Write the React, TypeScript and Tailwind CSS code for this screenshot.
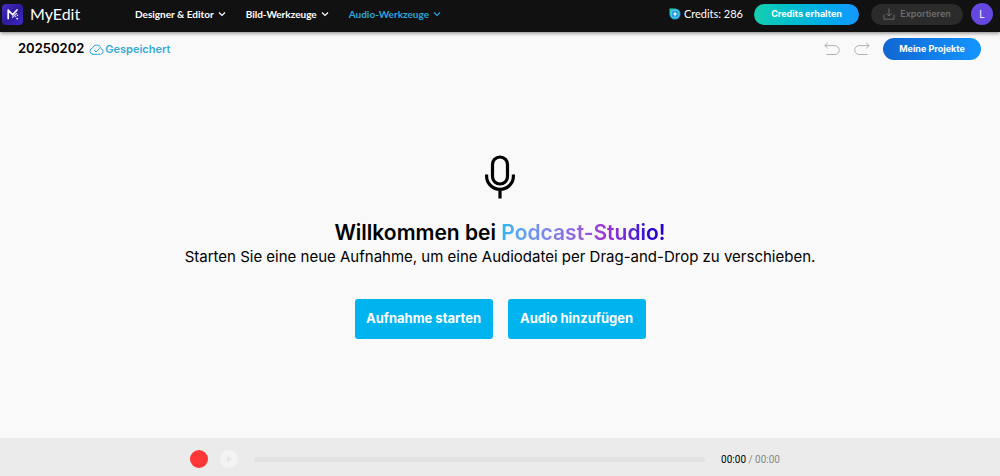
import type { ReactNode } from 'react'

const navItems = [
  { label: 'Designer & Editor', active: false },
  { label: 'Bild-Werkzeuge', active: false },
  { label: 'Audio-Werkzeuge', active: true },
]

function Logo() {
  return (
    <svg viewBox="0 0 21 21" className="size-[21px]" aria-hidden="true">
      <defs>
        <linearGradient id="logo-bg" x1="0" y1="0" x2="1" y2="1">
          <stop offset="0" stopColor="#4a2fc4" />
          <stop offset="0.5" stopColor="#2d1a9c" />
          <stop offset="1" stopColor="#3c2bc8" />
        </linearGradient>
      </defs>
      <rect width="21" height="21" rx="4" fill="url(#logo-bg)" />
      <path d="M6.2 14.6V6l4.4 4.8L15 6" fill="none" stroke="#fff" strokeWidth="1.7" strokeLinejoin="round" strokeLinecap="round" />
      <path d="M10.6 13.2 14.6 9.4" fill="none" stroke="#d9d2ff" strokeWidth="1.3" strokeLinecap="round" />
      <circle cx="15.2" cy="14.6" r="0.9" fill="#fff" />
      <circle cx="13.6" cy="12.5" r="0.8" fill="#c9c0ff" />
      <circle cx="15.4" cy="11.2" r="0.7" fill="#fff" />
    </svg>
  )
}

function Chevron() {
  return (
    <svg viewBox="0 0 8 8" className="size-2" fill="none" stroke="currentColor" strokeWidth="1.2" aria-hidden="true">
      <path d="M1 2.5 4 5.5 7 2.5" />
    </svg>
  )
}

function CreditIcon() {
  return (
    <svg viewBox="0 0 12 12" className="size-3" aria-hidden="true">
      <defs>
        <linearGradient id="credit" x1="0" y1="0" x2="1" y2="1">
          <stop offset="0" stopColor="#25d6b0" />
          <stop offset="1" stopColor="#1493f5" />
        </linearGradient>
      </defs>
      <path d="M.5.5H6A5.5 5.5 0 1 1 .5 6Z" fill="url(#credit)" />
      <circle cx="6" cy="6" r="3.9" fill="#1690d8" stroke="#7be3f2" strokeWidth="0.7" />
      <path d="M6 3.6 6.6 5.4 8.4 6 6.6 6.6 6 8.4 5.4 6.6 3.6 6 5.4 5.4Z" fill="#fff" stroke="#fff" strokeWidth="0.3" />
    </svg>
  )
}

function DownloadIcon() {
  return (
    <svg viewBox="0 0 12 12" className="size-3" fill="none" stroke="currentColor" strokeWidth="1" aria-hidden="true">
      <path d="M1 6.5v4.7h10V6.5M6 .5v7.3M3.3 5.3 6 8l2.7-2.7" />
    </svg>
  )
}

function CloudCheckIcon() {
  return (
    <svg viewBox="0 0 15 11" className="h-[11px] w-[15px]" fill="none" stroke="currentColor" strokeWidth="1" strokeLinecap="round" strokeLinejoin="round" aria-hidden="true">
      <path d="M3.7 10.3h7.8a2.9 2.9 0 0 0 .5-5.7A4.4 4.4 0 0 0 3.5 4 3.2 3.2 0 0 0 3.7 10.3Z" />
      <path d="M5.3 6.3 7 8l3.3-3.4" />
    </svg>
  )
}

function UndoIcon() {
  return (
    <svg viewBox="0 0 16 14" className="h-3.5 w-4" fill="none" stroke="currentColor" strokeWidth="1" aria-hidden="true">
      <path d="M3.8.8.8 3.6l3 2.8M.8 3.6h10a4.4 4.4 0 0 1 0 8.9H2.5" />
    </svg>
  )
}

function MicIcon() {
  return (
    <svg viewBox="0 0 30 44" className="h-11 w-[30px]" fill="none" stroke="#000" strokeWidth="3.2" aria-hidden="true">
      <rect x="7.5" y="2" width="15" height="27" rx="7.5" />
      <path d="M1.6 19.5v1.8a13.4 13 0 0 0 26.8 0V19.5M15 34.5v9" />
    </svg>
  )
}

function ActionButton({ children }: { children: ReactNode }) {
  return (
    <button type="button" className="h-10 w-[138px] rounded-[3px] bg-[#00b4ef] text-[13px] font-bold text-white">
      {children}
    </button>
  )
}

export default function App() {
  return (
    <div className="flex min-h-screen flex-col bg-[#f9f9f9] font-['Inter','DejaVu_Sans',sans-serif] text-black">
      <header className="z-10 flex h-8 items-center bg-[#111111] pr-[7px] pb-1 pl-0.5 text-white shadow-[0_1px_4px_rgba(0,0,0,0.5)]">
        <a href="#" className="flex w-[133px] items-center gap-[7px]">
          <Logo />
          <span className="font-['Lato',sans-serif] text-[16px] leading-5">MyEdit</span>
        </a>
        <nav className="flex gap-5 font-['Lato',sans-serif] text-[10px] font-bold">
          {navItems.map((item) => (
            <button
              key={item.label}
              type="button"
              className={item.active ? 'flex items-center gap-1 whitespace-nowrap text-[#2ba6de]' : 'flex items-center gap-1 whitespace-nowrap'}
            >
              {item.label}
              <Chevron />
            </button>
          ))}
        </nav>
        <div className="ml-auto flex items-center">
          <span className="mr-[11px] flex items-center gap-[3px] font-['Lato',sans-serif] text-[11px] whitespace-nowrap">
            <CreditIcon />
            Credits: 286
          </span>
          <button type="button" className="mr-3 h-[21px] w-[105px] rounded-full bg-linear-to-r from-[#17cfae] to-[#1697ff] text-[9px] font-bold">
            Credits erhalten
          </button>
          <button type="button" disabled className="mr-2 flex h-[21px] w-[92px] items-center justify-center gap-[5px] rounded-full bg-[#2b2b2b] text-[9px] font-semibold text-[#6c6c6c]">
            <DownloadIcon />
            Exportieren
          </button>
          <button type="button" aria-label="Konto" className="size-[22px] rounded-full bg-[#6648e0] text-[10px]">
            L
          </button>
        </div>
      </header>

      <div className="flex h-[34px] items-center pr-[19px] pl-[18px]">
        <h2 className="text-[13px] font-semibold">20250202</h2>
        <span className="ml-[5px] flex items-center gap-px text-[11px] font-semibold text-[#35aad5]">
          <CloudCheckIcon />
          Gespeichert
        </span>
        <div className="ml-auto flex items-center text-[#b0b0b0]">
          <button type="button" aria-label="Rückgängig" className="mr-3.5">
            <UndoIcon />
          </button>
          <button type="button" aria-label="Wiederholen" className="mr-[13px] -scale-x-100">
            <UndoIcon />
          </button>
          <button type="button" className="h-[22px] w-[98px] rounded-full bg-linear-to-r from-[#1166d2] to-[#1496ff] text-[9px] font-bold text-white">
            Meine Projekte
          </button>
        </div>
      </div>

      <main className="flex flex-1 flex-col items-center justify-center pb-2.5 text-center">
        <MicIcon />
        <h1 className="mt-5 text-[21px] leading-7 font-semibold">
          Willkommen bei{' '}
          <span className="bg-linear-to-r from-[#20b8f4] via-[#a02cd4] via-65% to-[#2a00d0] to-90% bg-clip-text text-transparent">
            Podcast-Studio!
          </span>
        </h1>
        <p className="text-[15px] leading-5">Starten Sie eine neue Aufnahme, um eine Audiodatei per Drag-and-Drop zu verschieben.</p>
        <div className="mt-8 flex gap-[15px]">
          <ActionButton>Aufnahme starten</ActionButton>
          <ActionButton>Audio hinzufügen</ActionButton>
        </div>
      </main>

      <footer className="flex h-[38px] items-center bg-[#ebebeb] pt-1 pr-[22%] pl-[19%]">
        <button type="button" aria-label="Aufnehmen" className="size-[18px] rounded-full bg-[#fd3636]" />
        <button type="button" aria-label="Wiedergabe" disabled className="ml-3 flex size-[18px] items-center justify-center rounded-full bg-[#f3f3f3]">
          <svg viewBox="0 0 8 8" className="size-2 fill-[#e6e6e6]" aria-hidden="true">
            <path d="M2 1v6l5-3z" />
          </svg>
        </button>
        <div className="ml-4 h-[5px] flex-1 rounded-full bg-[#e1e1e1]" />
        <div className="ml-4 font-['Roboto',sans-serif] text-[10px] whitespace-nowrap text-[#888888]">
          <span className="text-black">00:00</span> / 00:00
        </div>
      </footer>
    </div>
  )
}
